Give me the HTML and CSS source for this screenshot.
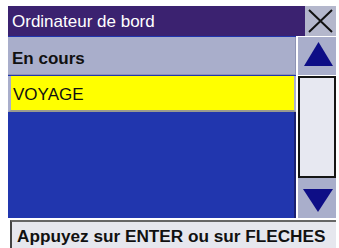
FILE: index.html
```html
<!DOCTYPE html>
<html>
<head>
<meta charset="utf-8">
<link rel="stylesheet" href="styles.css">
</head>
<body>
<div class="screen">
  <div class="header">
    <div class="title">Ordinateur de bord</div>
    <div class="close">
      <svg width="31" height="30" viewBox="0 0 31 30"><path d="M4 4 L27 26 M27 4 L4 26" stroke="#111" stroke-width="2" fill="none"/></svg>
    </div>
  </div>
  <div class="main">
    <div class="list">
      <div class="row-head">En cours</div>
      <div class="row-sel">VOYAGE</div>
      <div class="fill"></div>
    </div>
    <div class="scroll">
      <div class="btn-up">
        <svg width="38" height="38" viewBox="0 0 38 38"><polygon points="6,29 35,29 20.5,5" fill="#0e0e86"/></svg>
      </div>
      <div class="track"></div>
      <div class="btn-down">
        <svg width="38" height="40" viewBox="0 0 38 40"><polygon points="5,11 35,11 20,34" fill="#0e0e86"/></svg>
      </div>
    </div>
  </div>
  <div class="status">Appuyez sur ENTER ou sur FLECHES</div>
</div>
</body>
</html>
```
FILE: styles.css
```css
html, body {
  margin: 0;
  padding: 0;
  background: #ffffff;
}
.screen {
  width: 339px;
  height: 248px;
  box-sizing: border-box;
  padding: 6px 3px 0 8px;
  font-family: "Liberation Sans", Arial, sans-serif;
  overflow: hidden;
}
.header {
  display: flex;
  height: 30px;
}
.title {
  flex: 1;
  background: #3b2270;
  color: #ffffff;
  font-size: 17px;
  line-height: 17px;
  padding: 7px 0 0 4px;
  box-sizing: border-box;
}
.close {
  width: 31px;
  height: 30px;
  background: #b4b7cc;
}
.close svg, .btn-up svg, .btn-down svg {
  display: block;
}
.main {
  display: flex;
  gap: 2px;
  height: 182px;
}
.list {
  flex: 1;
  display: flex;
  flex-direction: column;
  background: #2136ae;
}
.row-head {
  margin-top: 1px;
  height: 38px;
  box-sizing: border-box;
  background: #a9aecb;
  border-right: 1px solid #8e93b3;
  border-bottom: 1px solid #8e93b3;
  font-weight: bold;
  font-size: 17px;
  line-height: 17px;
  padding: 13px 0 0 4px;
  color: #111;
}
.row-sel {
  margin-top: 1px;
  height: 36px;
  box-sizing: border-box;
  background: #ffff00;
  border-left: 3px solid #a9aecb;
  border-bottom: 2px solid #9a9a90;
  border-right: 2px solid #a9aecb;
  font-size: 17px;
  line-height: 17px;
  padding: 10px 0 0 2px;
  color: #111;
}
.fill {
  flex: 1;
  border-right: 2px solid #1a2070;
}
.scroll {
  width: 38px;
  display: flex;
  flex-direction: column;
}
.btn-up {
  margin-top: 1px;
  height: 38px;
  background: #a9aecb;
}
.track {
  margin-top: 1px;
  height: 102px;
  box-sizing: border-box;
  background: #e7e8f1;
  border: 2px solid #151515;
}
.btn-down {
  height: 40px;
  background: #a9aecb;
}
.status {
  margin: 2px 0 0 2px;
  height: 28px;
  box-sizing: border-box;
  background: #e6e7ee;
  border-top: 2px solid #666;
  border-left: 2px solid #444;
  font-weight: bold;
  font-size: 17.2px;
  line-height: 17px;
  padding: 6px 0 0 5px;
  color: #111;
  white-space: nowrap;
}
```
